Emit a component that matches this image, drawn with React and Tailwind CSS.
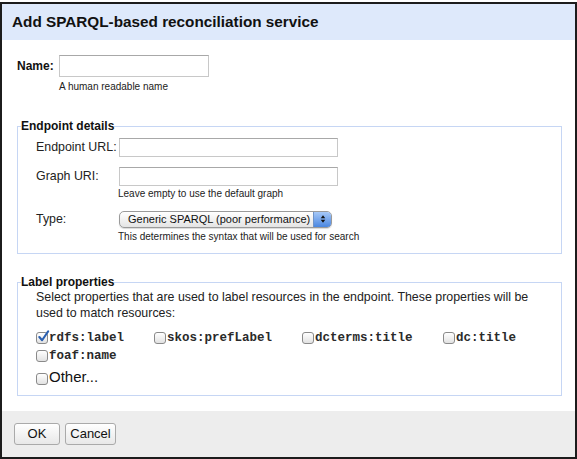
import React from 'react';

function Box({ checked, className = '' }) {
  return (
    <span className={`relative inline-block w-[12px] h-[12px] rounded-[3px] border border-[#8a8a8a] bg-gradient-to-b from-white to-[#e2e2e2] shrink-0 ${className}`}>
      {checked && (
        <svg viewBox="0 0 14 14" className="absolute left-[0px] top-[-3px] w-[13px] h-[13px]">
          <path d="M2.5 7.5 L5.5 11 L12 1.5" fill="none" stroke="#2a5fb0" strokeWidth="2.2" strokeLinecap="round" strokeLinejoin="round" />
        </svg>
      )}
    </span>
  );
}

function Prop({ label, checked, className = '' }) {
  return (
    <label className={`flex items-center gap-[1px] ${className}`}>
      <Box checked={checked} />
      <span className="font-['Liberation_Mono',monospace] font-bold text-[12.5px] leading-[16px] text-[#2a2a2a] whitespace-nowrap">{label}</span>
    </label>
  );
}

export default function App() {
  return (
    <div className="w-[577px] h-[459px] bg-white pt-[2px] font-['Liberation_Sans',Arial,sans-serif] text-[#111]">
      <div className="w-[577px] h-[457px] border-2 border-[#1c1c1c] flex flex-col">
        {/* header */}
        <div className="h-[36px] bg-[#dee9fb] flex items-center pl-[10px]">
          <h1 className="text-[15.3px] font-bold text-[#111]">Add SPARQL-based reconciliation service</h1>
        </div>

        {/* body */}
        <div className="flex-1 pl-[15px] pr-[13px] pt-[15px]">
          <div className="flex items-center">
            <span className="text-[12px] font-bold w-[42px]">Name:</span>
            <div className="w-[150px] h-[22px] border border-[#c8c8c8] border-t-[#a8a8a8]" />
          </div>
          <div className="pl-[42px] mt-[2px] text-[10px] text-[#222]">A human readable name</div>

          <fieldset className="mt-[25px] border border-[#c6d6f4] px-[3px] h-[135px]">
            <legend className="text-[12px] font-bold leading-[14px]">Endpoint details</legend>
            <div className="pl-[15px] pt-[5px] text-[12.4px] text-[#222]">
              <div className="flex items-center">
                <span className="w-[83px] whitespace-nowrap">Endpoint URL:</span>
                <div className="w-[219px] h-[19px] border border-[#c8c8c8] border-t-[#a8a8a8]" />
              </div>
              <div className="flex items-center mt-[10px]">
                <span className="w-[83px] whitespace-nowrap">Graph URI:</span>
                <div className="w-[219px] h-[19px] border border-[#c8c8c8] border-t-[#a8a8a8]" />
              </div>
              <div className="pl-[82px] mt-[1px] text-[10px] leading-[14px] text-[#222]">Leave empty to use the default graph</div>
              <div className="flex items-center mt-[9px]">
                <span className="w-[83px] whitespace-nowrap">Type:</span>
                <div className="w-[213px] h-[17px] rounded-[5px] border border-[#9a9a9a] bg-gradient-to-b from-white to-[#e4e4e4] flex items-stretch overflow-hidden shadow-[0_1px_1px_rgba(0,0,0,0.15)]">
                  <span className="flex-1 pl-[8px] text-[11px] leading-[15px] text-[#111] whitespace-nowrap">Generic SPARQL (poor performance)</span>
                  <span className="w-[18px] bg-gradient-to-b from-[#a6c8f7] to-[#4a86e0] border-l border-[#6f93c8] flex items-center justify-center">
                    <svg viewBox="0 0 8 12" className="w-[6px] h-[10px]">
                      <path d="M4 1 L7 5 H1 Z M4 11 L7 7 H1 Z" fill="#111" />
                    </svg>
                  </span>
                </div>
              </div>
              <div className="pl-[82px] mt-[1px] text-[10px] leading-[14px] text-[#222]">This determines the syntax that will be used for search</div>
            </div>
          </fieldset>

          <fieldset className="mt-[21px] border border-[#c6d6f4] px-[3px] h-[121px]">
            <legend className="text-[12px] font-bold leading-[14px]">Label properties</legend>
            <div className="pl-[15px] text-[12.4px] leading-[16px] text-[#222]">
              <p>
                Select properties that are used to label resources in the endpoint. These properties will be
                <br />
                used to match resources:
              </p>
              <div className="flex mt-[9px]">
                <Prop label="rdfs:label" checked className="w-[118px]" />
                <Prop label="skos:prefLabel" className="w-[148px]" />
                <Prop label="dcterms:title" className="w-[141px]" />
                <Prop label="dc:title" />
              </div>
              <Prop label="foaf:name" className="mt-[2px]" />
              <label className="flex items-end gap-[1px] mt-[4px]">
                <Box className="w-[11px] h-[11px] mb-[1px]" />
                <span className="text-[15px] leading-[18px] text-[#111]">Other...</span>
              </label>
            </div>
          </fieldset>
        </div>

        {/* footer */}
        <div className="h-[46px] bg-[#ededed] flex items-center gap-[5px] pl-[12px]">
          <button className="w-[46px] h-[22px] rounded-[3px] border border-[#aaa] bg-gradient-to-b from-white to-[#e8e8e8] text-[13px] text-[#111]">OK</button>
          <button className="w-[51px] h-[22px] rounded-[3px] border border-[#aaa] bg-gradient-to-b from-white to-[#e8e8e8] text-[13px] text-[#111]">Cancel</button>
        </div>
      </div>
    </div>
  );
}
